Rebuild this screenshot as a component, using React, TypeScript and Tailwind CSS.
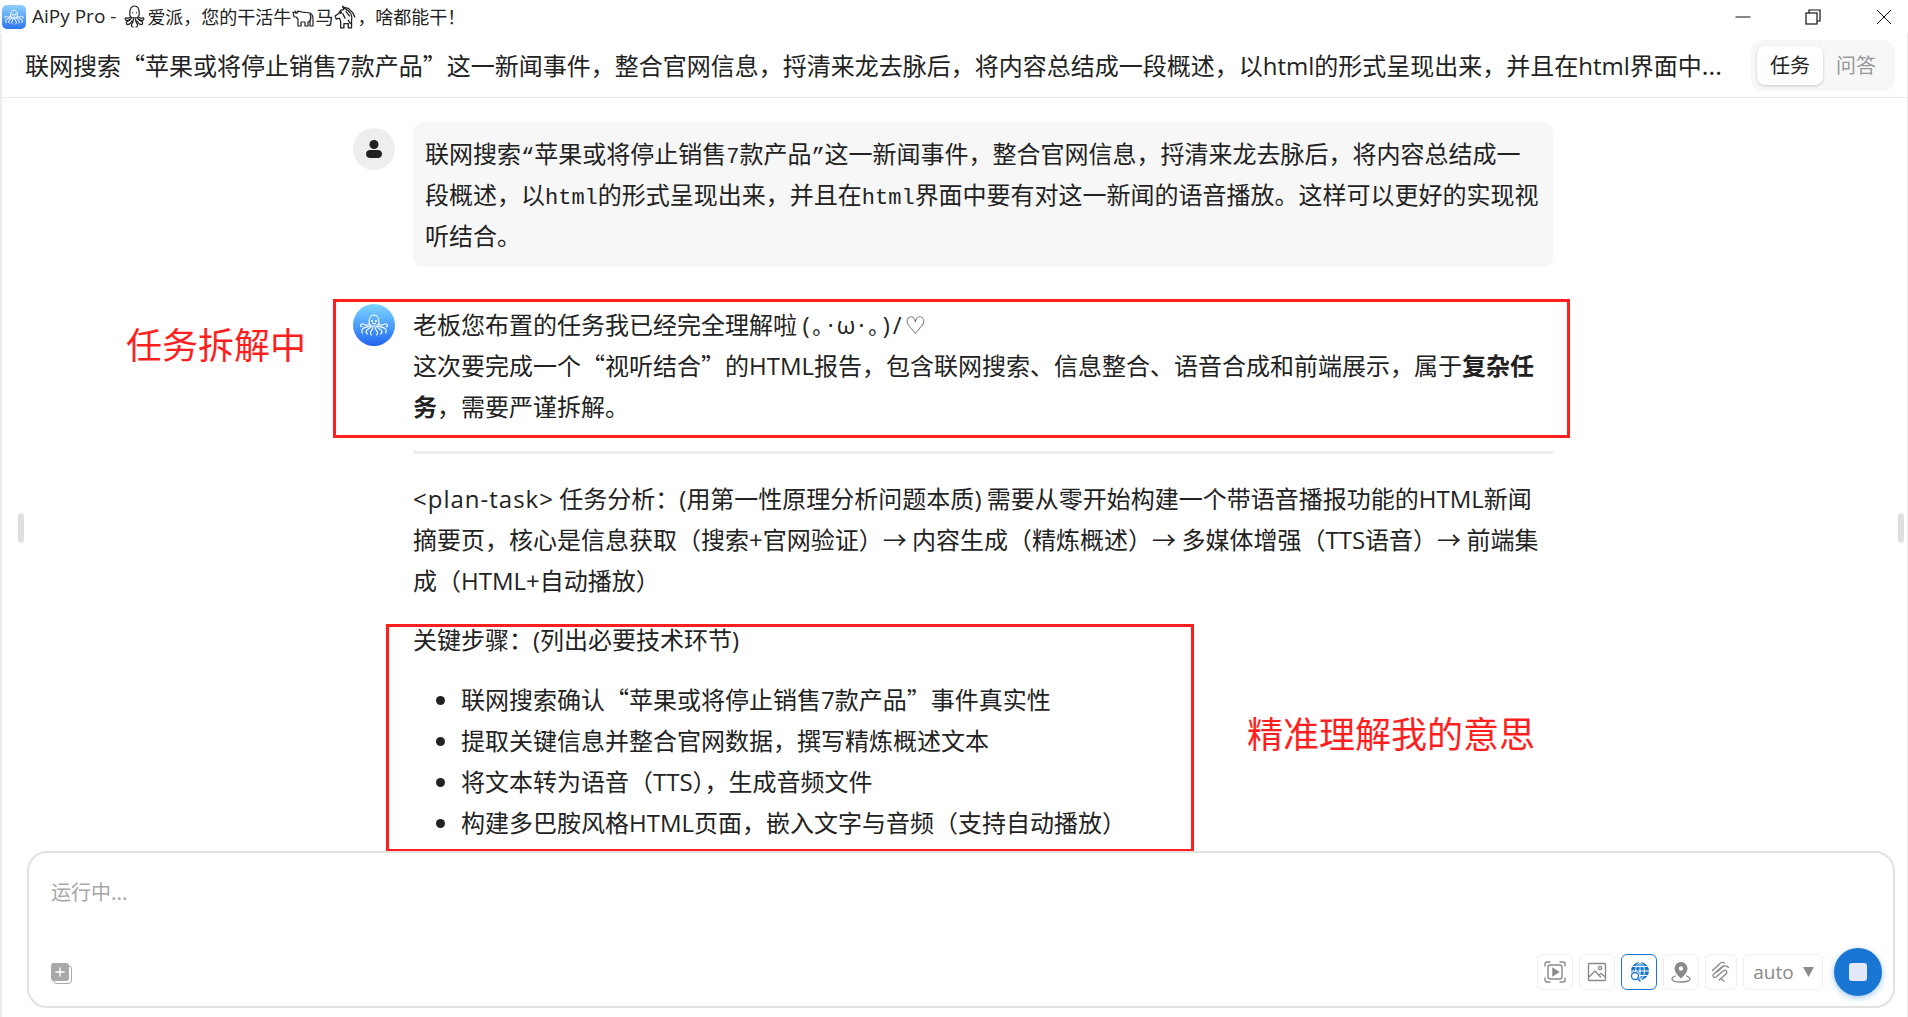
const cjk = "font-['Noto_Sans_CJK_SC','Noto_Sans',sans-serif]";

function L({ children }: { children: React.ReactNode }) {
  return <span className="font-['Open_Sans',sans-serif] leading-none">{children}</span>;
}

function Mono({ children }: { children: string }) {
  return <span className="font-['Liberation_Mono',monospace] text-[22px] leading-none">{children}</span>;
}

function Octopus({ color = "white", sw = 1.6 }: { color?: string; sw?: number }) {
  return (
    <svg viewBox="0 0 32 32" className="w-full h-full" fill="none" stroke={color} strokeWidth={sw} strokeLinecap="round" strokeLinejoin="round">
      <path d="M11 13c0-4 2-7 5-7s5 3 5 7c0 2-1 3-2 4h-6c-1-1-2-2-2-4z" />
      <circle cx="14" cy="12" r=".5" />
      <circle cx="18" cy="12" r=".5" />
      <path d="M14.5 14.2c1 .7 2 .7 3 0" />
      <path d="M11.5 15c-2 1.6-4 1.5-5.5.3-1.500-1-3.500-.3-3.500 1.300 0 1 1 1.400 1.500 .9" />
      <path d="M20.500 15c2 1.600 4 1.500 5.500.3 1.500-1 3.500-.3 3.500 1.300 0 1-1 1.400-1.500.9" />
      <path d="M12 17c-2 1-5 1-7 2.500-1.500 1.200-1.500 3.500-.5 4.500" />
      <path d="M20 17c2 1 5 1 7 2.500 1.500 1.200 1.500 3.500.5 4.500" />
      <path d="M13.500 17.500c-1.500 2-4 2-5 4-.7 1.500 0 3 1 3.500" />
      <path d="M18.500 17.500c1.500 2 4 2 5 4 .7 1.500 0 3-1 3.500" />
      <path d="M15 18c0 2.500-2 3.500-2.500 5.500-.3 1.200.3 2 1 2.500" />
      <path d="M17 18c0 2.500 2 3.500 2.500 5.500.3 1.200-.3 2-1 2.500" />
    </svg>
  );
}

function OctopusGlyph() {
  return (
    <svg viewBox="0 0 22 24" className="w-[21px] h-[23px] ml-[8px] mr-[2px]" fill="none" stroke="#222" strokeWidth="1.300" strokeLinecap="round" strokeLinejoin="round">
      <path d="M6 9c0-5 2-8 5-8s5 3 5 8c0 2-1 3.500-2 4.500H8C7 12.500 6 11 6 9z" />
      <path d="M9 8h.01M13 8h.01" />
      <path d="M7 12c-1 2-3 2-4.500 1.500C1 13 .8 15 2 15.800c1.200.7 3 .2 4.500-.8" />
      <path d="M15 12c1 2 3 2 4.500 1.500 1.500-.5 1.700 1.500.5 2.300-1.200.7-3 .2-4.500-.8" />
      <path d="M7.500 14c-.5 2-3 2.500-4.500 3.500-1 1-.5 3 1 3 2 0 3.500-2 4.500-4" />
      <path d="M14.500 14c.5 2 3 2.500 4.500 3.500 1 1 .5 3-1 3-2 0-3.500-2-4.500-4" />
      <path d="M10 14.500c0 2.500-1 4-2 5.500-.7 1.200 0 3 1.500 3M12 14.500c0 2.500 1 4 2 5.500.7 1.200 0 3-1.500 3" />
    </svg>
  );
}

function OxGlyph() {
  return (
    <svg viewBox="0 0 22 22" className="w-[24px] h-[22px]" fill="none" stroke="#222" strokeWidth="1.200" strokeLinejoin="round" strokeLinecap="round">
      <path d="M1 6l3 1c2-2 4-2 6-1 3 1 6 0 8 1 2 1 3 3 3 6v7h-3v-5l-2 1v4h-3v-4H9v4H6v-7L4 11l-2 0z" />
      <path d="M3 5l1 2M6 5l-1 2M18 8c1 2 1 5 0 7" />
    </svg>
  );
}

function HorseGlyph() {
  return (
    <svg viewBox="0 0 22 22" className="w-[24px] h-[24px]" fill="none" stroke="#222" strokeWidth="1.200" strokeLinejoin="round" strokeLinecap="round">
      <path d="M5 8l-3 2 1 3 3-1 1 3v6h3v-4h4v4h3v-7c1-4-1-8-5-10L9 1l1 3-3 1z" />
      <path d="M9 2l5 1 4 4 2 4M12 6l3 4M9 8l2 4M14 14l2 3" />
      <circle cx="7" cy="7" r=".6" fill="#222" />
    </svg>
  );
}

function TitleBar() {
  return (
    <div className="h-[33px] shrink-0 flex items-center bg-white">
      <div className="ml-[2px] w-[24px] h-[24px] rounded-[5px] bg-gradient-to-b from-[#8fd0ff] to-[#2f74ee] p-[1px]">
        <Octopus sw={1.400} />
      </div>
      <div className={`ml-[6px] flex items-center text-[18px] text-[#222] whitespace-nowrap ${cjk}`}>
        <span className="font-['Open_Sans',sans-serif] text-[19px]">AiPy Pro -</span>
        <OctopusGlyph />
        <span>爱派，您的干活牛</span>
        <OxGlyph />
        <span>马</span>
        <HorseGlyph />
        <span>，啥都能干！</span>
      </div>
      <div className="ml-auto flex items-center h-full">
        <svg width="16" height="16" viewBox="0 0 16 16" className="mr-[54px]" fill="none" stroke="#111" strokeWidth="1"><path d="M0.500 8h15" /></svg>
        <svg width="16" height="16" viewBox="0 0 16 16" className="mr-[55px]" fill="none" stroke="#111" strokeWidth="1.200"><rect x="1" y="4" width="11" height="11" /><path d="M4 4V1h11v11h-3" /></svg>
        <svg width="16" height="16" viewBox="0 0 16 16" className="mr-[16px]" fill="none" stroke="#111" strokeWidth="1"><path d="M1 1l14 14M15 1L1 15" /></svg>
      </div>
    </div>
  );
}

function Header() {
  return (
    <div className="h-[65px] shrink-0 flex items-center justify-between border-b border-[#ebebeb] pl-[23px] pr-[12px]">
      <div className={`text-[24px] text-[#222] whitespace-nowrap ${cjk}`}>
        联网搜索“苹果或将停止销售<L>7</L>款产品”这一新闻事件，整合官网信息，捋清来龙去脉后，将内容总结成一段概述，以<L>html</L>的形式呈现出来，并且在<L>html</L>界面中...
      </div>
      <div className={`shrink-0 w-[144px] h-[51px] rounded-[12px] bg-[#f7f7f7] flex items-center p-[6px] text-[20px] ${cjk}`}>
        <div className="w-[66px] h-[39px] rounded-[8px] bg-white shadow-[0_1px_3px_rgba(0,0,0,0.2)] flex items-center justify-center text-[#222]">任务</div>
        <div className="flex-1 flex items-center justify-center text-[#999]">问答</div>
      </div>
    </div>
  );
}

function Chat() {
  return (
    <div className={`flex-1 min-h-0 overflow-hidden relative text-[24px] leading-[41px] text-[#222] ${cjk}`}>
      <div className="w-[1200px] ml-[351px] pt-[24px]">
        <div className="flex gap-[18px]">
          <div className="w-[42px] h-[42px] mt-[6px] shrink-0 rounded-full bg-[#eeeeee] flex items-center justify-center">
            <svg width="20" height="20" viewBox="0 0 20 20" fill="#222"><circle cx="10" cy="5.500" r="4.500" /><path d="M2 15c0-2.500 2-4 4-4h8c2 0 4 1.500 4 4 0 2.500-2 4-4 4H6c-2 0-4-1.500-4-4z" /></svg>
          </div>
          <div className="flex-1 bg-[#f7f7f7] rounded-[10px] px-[12px] pt-[10px] pb-[12px] break-all">
            联网搜索<Mono>“</Mono>苹果或将停止销售<Mono>7</Mono>款产品<Mono>”</Mono>这一新闻事件，整合官网信息，捋清来龙去脉后，将内容总结成一段概述，以<Mono>html</Mono>的形式呈现出来，并且在<Mono>html</Mono>界面中要有对这一新闻的语音播放。这样可以更好的实现视听结合。
          </div>
        </div>
        <div className="flex gap-[18px] mt-[37px]">
          <div className="w-[42px] h-[42px] shrink-0 rounded-full bg-gradient-to-b from-[#7fd6ff] to-[#2563f0] p-[5px]">
            <Octopus sw={1.100} />
          </div>
          <div className="flex-1 -mt-[1px]">
            <div>老板您布置的任务我已经完全理解啦 <L><span className="tracking-[3px]">(｡·ω·｡)/</span></L><span className="font-['DejaVu_Sans',sans-serif] leading-none">♡</span></div>
            <div>这次要完成一个“视听结合”的<L>HTML</L>报告，包含联网搜索、信息整合、语音合成和前端展示，属于<b>复杂任务</b>，需要严谨拆解。</div>
            <div className="h-[3px] bg-[#eeeeee] mt-[25px] mb-[23px]" />
            <div><L><span className="tracking-[1px]">&lt;plan-task&gt;</span></L> 任务分析：<L>(</L>用第一性原理分析问题本质<L>)</L> 需要从零开始构建一个带语音播报功能的<L>HTML</L>新闻摘要页，核心是信息获取（搜索<L>+</L>官网验证）→ 内容生成（精炼概述）→ 多媒体增强（<L>TTS</L>语音）→ 前端集成（<L>HTML+</L>自动播放）</div>
            <div className="mt-[18px]">关键步骤：<L>(</L>列出必要技术环节<L>)</L></div>
            <ul className="list-disc pl-[48px] mt-[19px]">
              <li>联网搜索确认“苹果或将停止销售<L>7</L>款产品”事件真实性</li>
              <li>提取关键信息并整合官网数据，撰写精炼概述文本</li>
              <li>将文本转为语音（<L>TTS</L>），生成音频文件</li>
              <li>构建多巴胺风格<L>HTML</L>页面，嵌入文字与音频（支持自动播放）</li>
            </ul>
          </div>
        </div>
      </div>

      <div className="absolute left-[331px] top-[201px] w-[1237px] h-[139px] border-[3px] border-[#ff1f1f]" />
      <div className="absolute left-[384px] top-[526px] w-[808px] h-[228px] border-[3px] border-[#ff1f1f]" />
      <div className="absolute left-[124px] top-[220px] text-[36px] leading-[50px] text-[#ff1f1f]">任务拆解中</div>
      <div className="absolute left-[1245px] top-[609px] text-[36px] leading-[50px] text-[#ff1f1f]">精准理解我的意思</div>
      <div className="absolute left-[16px] top-[415px] w-[6px] h-[30px] rounded-full bg-[#dedee3]" />
      <div className="absolute right-[3px] top-[415px] w-[6px] h-[30px] rounded-full bg-[#dedee3]" />
    </div>
  );
}

function ToolBtn({ w = "w-[36px]", active, children }: { w?: string; active?: boolean; children: React.ReactNode }) {
  return (
    <div className={`${w} h-[36px] rounded-[6px] border flex items-center justify-center ${active ? "border-[#1976d2]" : "border-[#eeeeee]"}`}>
      {children}
    </div>
  );
}

function InputBox() {
  return (
    <div className="shrink-0 h-[166px] pl-[25px] pr-[12px] pb-[9px]">
      <div className={`h-full border-2 border-[#e2e2e2] rounded-[20px] flex flex-col px-[22px] ${cjk} bg-white`}>
        <div className="text-[20px] text-[#a8a8a8] mt-[24px] leading-[30px]">运行中...</div>
        <div className="mt-auto mb-[10px] flex items-end">
          <div className="mb-[12px] relative w-[21px] h-[21px]">
            <div className="absolute left-[2px] top-[2px] w-[19px] h-[19px] rounded-[4px] border border-[#aaaaaa] bg-white" />
            <div className="absolute left-0 top-0 w-[18px] h-[18px] rounded-[3px] bg-[#a8a8a8] flex items-center justify-center">
              <svg width="10" height="10" viewBox="0 0 10 10" stroke="white" strokeWidth="1.400"><path d="M5 .5v9M.5 5h9" /></svg>
            </div>
          </div>
          <div className="ml-auto flex items-center gap-[6px] -mr-[11px]">
            <ToolBtn>
              <svg width="22" height="22" viewBox="0 0 22 22" fill="none" stroke="#8a8a8a" strokeWidth="1.400" strokeLinecap="round">
                <rect x="4" y="4" width="14" height="14" rx="2.500" />
                <path d="M9 7.500v7l5.500-3.500z" fill="#8a8a8a" />
                <path d="M1 5V3a2 2 0 0 1 2-2h3M16 1h3a2 2 0 0 1 2 2v2M21 17v2a2 2 0 0 1-2 2h-3M6 21H3a2 2 0 0 1-2-2v-2" />
              </svg>
            </ToolBtn>
            <ToolBtn>
              <svg width="20" height="20" viewBox="0 0 20 20" fill="none" stroke="#8a8a8a" strokeWidth="1.400" strokeLinejoin="round">
                <rect x="1.500" y="1.500" width="17" height="17" rx="1" />
                <circle cx="13" cy="6" r="1.600" />
                <path d="M1.500 15.500L8 9l6 6.500M12 13l2-1.500 4.500 3.500" />
              </svg>
            </ToolBtn>
            <ToolBtn active>
              <svg width="22" height="22" viewBox="0 0 22 22" fill="none">
                <circle cx="12" cy="10" r="9" fill="#1976d2" />
                <path d="M3 10h18M12 1v18M12 1c-6 5-6 13 0 18M12 1c6 5 6 13 0 18M4.500 5.500h15M4.500 14.500h15" stroke="white" strokeWidth="1" />
                <circle cx="7" cy="15" r="4.800" fill="white" />
                <circle cx="7" cy="15" r="3.500" stroke="#1976d2" strokeWidth="1.300" />
                <path d="M9.500 17.500l2.500 2.500" stroke="#1976d2" strokeWidth="1.500" strokeLinecap="round" />
              </svg>
            </ToolBtn>
            <ToolBtn>
              <svg width="20" height="22" viewBox="0 0 20 22" fill="none">
                <path d="M10 1a6.500 6.500 0 0 0-6.500 6.500C3.500 12 10 17.500 10 17.500S16.500 12 16.500 7.500A6.500 6.500 0 0 0 10 1z" fill="#8a8a8a" />
                <circle cx="10" cy="7.500" r="2.200" fill="white" />
                <path d="M4.500 15C2.500 15.700 1 16.700 1 18c0 1.800 4 3 9 3s9-1.200 9-3c0-1.300-1.500-2.300-3.500-3" stroke="#8a8a8a" strokeWidth="1.300" strokeLinecap="round" />
              </svg>
            </ToolBtn>
            <ToolBtn w="w-[32px]">
              <svg width="20" height="22" viewBox="0 0 20 22" fill="none" stroke="#8a8a8a" strokeWidth="1.300" strokeLinecap="round" strokeLinejoin="round">
                <path d="M8 19l7-6c2-2 0-5-2.200-3.500L5 16c-2 1.500-4-1-2.500-2.700l8-7C13 4 16 4.500 17.500 6.500" />
                <path d="M6 11l6.500-6M1.500 9.500l7-6.500C10 1.500 12 1 13.500 2M10 18c1.500.5 2.500 1.500 3 2" />
              </svg>
            </ToolBtn>
            <ToolBtn w="w-[80px]">
              <span className="font-['Open_Sans',sans-serif] text-[19px] text-[#8a8a8a] ml-[1px]">auto</span>
              <svg width="11" height="10" viewBox="0 0 11 10" className="ml-[9px]" fill="#8a8a8a"><path d="M0 0h11L5.500 10z" /></svg>
            </ToolBtn>
            <div className="ml-[5px] w-[48px] h-[48px] rounded-full bg-[#1976d2] shadow-[0_2px_6px_rgba(25,118,210,0.4)] flex items-center justify-center">
              <div className="w-[18px] h-[18px] rounded-[3px] bg-[#e3e8fb]" />
            </div>
          </div>
        </div>
      </div>
    </div>
  );
}

export default function App() {
  return (
    <div className="h-screen w-full flex flex-col bg-white overflow-hidden">
      <TitleBar />
      <div className="flex-1 min-h-0 flex flex-col border-l-2 border-r border-[#eeeeee]">
        <Header />
        <Chat />
        <InputBox />
      </div>
    </div>
  );
}
